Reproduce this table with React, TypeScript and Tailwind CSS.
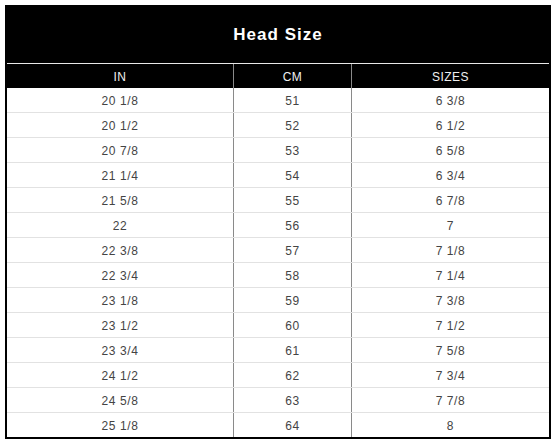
const rows: [string, string, string][] = [
  ["20 1/8", "51", "6 3/8"],
  ["20 1/2", "52", "6 1/2"],
  ["20 7/8", "53", "6 5/8"],
  ["21 1/4", "54", "6 3/4"],
  ["21 5/8", "55", "6 7/8"],
  ["22", "56", "7"],
  ["22 3/8", "57", "7 1/8"],
  ["22 3/4", "58", "7 1/4"],
  ["23 1/8", "59", "7 3/8"],
  ["23 1/2", "60", "7 1/2"],
  ["23 3/4", "61", "7 5/8"],
  ["24 1/2", "62", "7 3/4"],
  ["24 5/8", "63", "7 7/8"],
  ["25 1/8", "64", "8"],
]

export default function App() {
  return (
    <div className="w-[556px] h-[446px] bg-white p-[5px] font-['Liberation_Sans',Arial,sans-serif]">
      <div className="w-[546px] border-2 border-black">
        {/* title */}
        <div className="h-[57px] bg-black flex items-center justify-center border-b border-[#e8e8e8]">
          <h1 className="text-[17px] font-bold tracking-[1px] text-white">Head Size</h1>
        </div>
        {/* header row */}
        <div className="grid grid-cols-[226px_118px_1fr] h-[24px] bg-black text-[12px] tracking-[0.5px] text-[#f0f0f0]">
          <div className="flex items-center justify-center pt-[2px]">IN</div>
          <div className="flex items-center justify-center pt-[2px] border-l border-[#8a8a8a]">CM</div>
          <div className="flex items-center justify-center pt-[2px] border-l border-[#8a8a8a]">SIZES</div>
        </div>
        {/* data rows */}
        {rows.map(([inch, cm, size], i) => (
          <div
            key={inch}
            className={`grid grid-cols-[226px_118px_1fr] text-[12px] tracking-[0.6px] text-[#444] ${
              i < rows.length - 1 ? "h-[25px] border-b border-[#e2e2e2]" : "h-[24px]"
            }`}
          >
            <div className="flex items-center justify-center pt-[2px]">{inch}</div>
            <div className="flex items-center justify-center pt-[2px] border-l border-[#8a8a8a]">{cm}</div>
            <div className="flex items-center justify-center pt-[2px] border-l border-[#8a8a8a]">{size}</div>
          </div>
        ))}
      </div>
    </div>
  )
}
